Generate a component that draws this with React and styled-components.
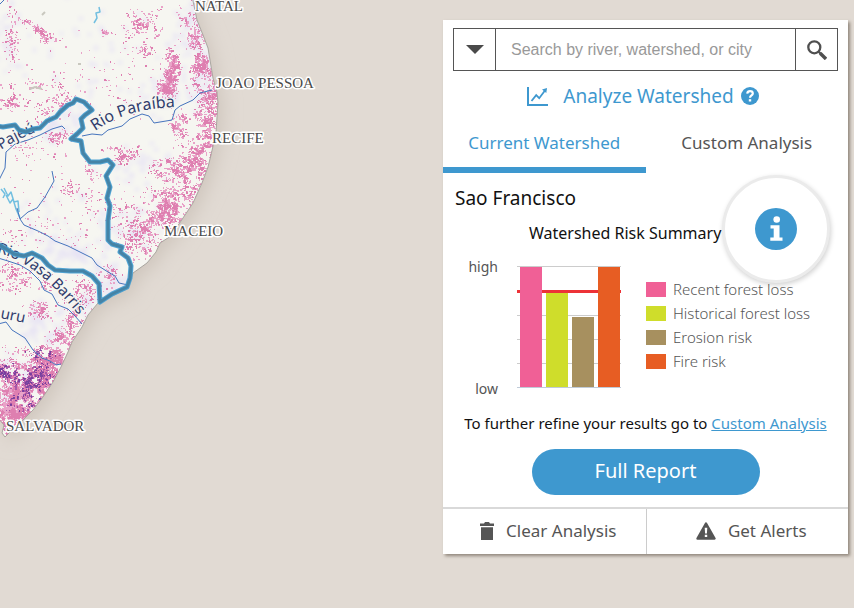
import React from "react";
import styled, { createGlobalStyle, css } from "styled-components";

const blue = "#3e98cf";
const ink = "#555";
const sans = `"Noto Sans", "Open Sans", sans-serif`;

const GlobalStyle = createGlobalStyle`
  *, *::before, *::after { box-sizing: border-box; }
  body { margin: 0; background: #e1dad3; font-family: ${sans}; color: #111; }
  button, input { font: inherit; color: inherit; }
  button { margin: 0; padding: 0; border: 0; background: none; cursor: pointer; }
  h1, h2, p, ul { margin: 0; padding: 0; font-weight: 400; list-style: none; }
`;

/* ---------- map ---------- */

const COAST =
  "M-4-4H192L197 20L203 35L208 48L210 60L213 78L217 92L218 103L217 117L216 133L211 155L208 167L202 183L193 203L183 218L171 236L160 243L156 252L147 263L133 273L128 288L98 303L88 315L82 327L72 342L68 352L61 367L53 382L43 397L33 410L20 423L10 432L5 437L2 433L4 425L-4 416Z";

const SHED =
  "M-4 126L3 127L15 125L19 130L26 132L33 129L40 128L47 121L56 117L60 112L68 105L73 103L76 99L84 102L92 110L85 115L81 119L83 128L77 134L71 139L81 141L83 153L90 162L100 162L108 160L113 165L106 176L110 187L107 198L110 206L108 220L108 240L112 244L122 247L120 252L128 258L131 266L130 278L127 287L112 294L100 302L99 284L92 276L83 271L70 271L55 270L48 265L42 258L32 253L24 256L14 254L8 250L-4 243";

const RIVERS = [
  "M82 136L92 134L102 135L108 130L122 126L130 119L142 114L149 116L154 123L172 120L175 110L180 106L193 100L200 93L212 90",
  "M65 129L62 126L52 129L40 135L28 140L15 144L6 152L5 168L-2 182",
  "M52 171L54 181L45 197L37 208L28 212L20 219L17 208M20 219L24 225L38 231L48 236L55 241L68 246L80 252L92 258L97 265L108 272L115 276L119 283L128 285",
  "M-2 258L8 261L20 265L30 271L40 281L44 290L52 294L58 305L68 309L75 316L82 324",
  "M-2 324L6 322L12 330L25 338L33 350L42 358L50 361L56 365L61 364",
  "M0 4L4 0",
];

const PALE_RIVERS = [
  "M99 7L100 12L96 13L97 18L94 23",
  "M1 189L5 194L3 198M4 188L8 196L11 192L14 202L18 201L19 212M6 195L10 203L13 199L16 209L20 218",
];

function makeRandom(seed) {
  let s = seed;
  return () => {
    s = (s * 1664525 + 1013904223) % 4294967296;
    return s / 4294967296;
  };
}

function hash(x, y) {
  const n = Math.sin(x * 127.1 + y * 311.7) * 43758.5453;
  return n - Math.floor(n);
}

// Smooth noise on a coarse grid; it breaks the patches into irregular clumps
function noise(x, y, cell) {
  const gx = Math.floor(x / cell);
  const gy = Math.floor(y / cell);
  const fx = x / cell - gx;
  const fy = y / cell - gy;
  const top = hash(gx, gy) * (1 - fx) + hash(gx + 1, gy) * fx;
  const low = hash(gx, gy + 1) * (1 - fx) + hash(gx + 1, gy + 1) * fx;
  return top * (1 - fy) + low * fy;
}

// Each patch: centre x, centre y, spread x, spread y, slope, number of cells
function speckle(patches, seed, size, clump) {
  const rnd = makeRandom(seed);
  const g = () => (rnd() + rnd() + rnd() - 1.5) * 1.15;
  let d = "";
  patches.forEach(([cx, cy, sx, sy, slope, n]) => {
    for (let i = 0; i < n; i += 1) {
      const gx = g();
      const x = Math.round(cx + gx * sx);
      const y = Math.round(cy + g() * sy + gx * sx * slope);
      const w = size + (rnd() > 0.6 ? 1 : 0);
      const h = size + (rnd() > 0.7 ? 1 : 0);
      if (noise(x, y, 5) * 0.6 + noise(x + 40, y, 2) * 0.4 > clump) d += `M${x} ${y}h${w}v${h}h-${w}z`;
    }
  });
  return d;
}

const PINK = [
  [11, 38, 6, 26, 0, 80], [36, 28, 16, 4, 0.6, 90], [46, 40, 5, 6, 0.4, 50],
  [106, 31, 5, 4, 0, 32], [140, 22, 16, 12, -0.4, 130], [143, 50, 8, 7, 0, 45],
  [158, 32, 4, 5, 0, 24], [171, 72, 6, 17, -0.4, 400], [165, 88, 7, 6, 0, 140],
  [186, 20, 9, 20, 0.3, 120], [195, 38, 8, 12, 0, 130], [201, 64, 9, 12, 0, 240],
  [211, 92, 6, 22, 0, 150], [198, 86, 9, 10, 0, 60], [178, 124, 7, 11, 0, 190],
  [205, 134, 10, 32, -0.1, 520], [194, 160, 18, 22, -0.5, 300],
  [182, 182, 24, 22, -0.7, 420], [160, 204, 24, 18, -0.5, 380],
  [165, 168, 14, 10, -0.3, 130], [176, 210, 16, 12, -0.5, 260],
  [150, 222, 24, 14, -0.5, 200], [135, 236, 14, 14, -0.4, 60],
  [148, 243, 13, 9, -0.7, 90], [125, 155, 11, 6, -0.4, 90], [112, 150, 10, 5, 0, 45],
  [35, 85, 28, 5, 0, 75], [13, 102, 12, 7, 0, 75], [50, 106, 20, 10, -0.4, 90],
  [58, 136, 12, 8, 0, 70], [25, 150, 22, 12, 0, 40], [93, 172, 10, 8, 0, 55],
  [70, 190, 9, 8, 0, 26], [95, 205, 14, 14, 0, 36], [108, 276, 10, 10, 0, 70],
  [66, 232, 36, 9, 0.3, 45], [20, 230, 18, 14, 0, 30], [15, 273, 14, 9, 0.4, 90],
  [8, 284, 12, 8, 0, 45], [40, 310, 12, 8, 0, 120], [82, 292, 14, 13, -0.3, 150],
  [73, 318, 9, 8, -0.3, 110], [45, 283, 8, 7, 0, 30], [58, 345, 11, 16, -0.6, 340],
  [45, 355, 13, 8, 0, 150], [35, 382, 26, 22, -0.6, 1900], [16, 402, 18, 22, 0.2, 1300],
  [10, 370, 14, 9, 0, 250], [8, 415, 11, 13, 0, 300], [20, 350, 22, 7, 0, 40],
  [115, 80, 70, 45, 0, 110], [40, 200, 60, 70, 0, 60], [120, 215, 12, 25, 0, 45],
];

const VIOLET = [
  [6, 371, 10, 6, 0, 110], [24, 378, 15, 8, 0, 130], [30, 392, 9, 16, 0, 80],
  [44, 353, 15, 4, 0, 40], [18, 400, 12, 9, 0, 30], [40, 372, 9, 10, -0.4, 45],
  [50, 382, 5, 7, 0, 20],
];

const LILAC = [
  [188, 28, 12, 28, 0, 65], [205, 75, 12, 28, 0, 70], [168, 95, 24, 22, 0, 55],
  [10, 35, 14, 30, 0, 35], [60, 122, 24, 14, -0.4, 55], [135, 225, 25, 18, -0.4, 60],
  [65, 250, 28, 15, 0.3, 60], [112, 280, 16, 16, 0, 75], [40, 325, 22, 22, 0, 80],
  [140, 165, 35, 18, 0, 40], [100, 50, 90, 50, 0, 65], [75, 225, 45, 32, 0, 60],
  [15, 385, 20, 30, 0, 95], [85, 300, 14, 14, 0, 35],
];

const PATCH_PINK = speckle(PINK, 17, 1, 0.4);
const PATCH_ROSE = speckle(PINK, 71, 1, 0.54);
const PATCH_VIOLET = speckle(VIOLET, 5, 1, 0.4);
const PATCH_PLUM = speckle(VIOLET, 9, 1, 0.5);
const PATCH_LILAC = speckle(LILAC, 31, 3, 0.3);

const CITIES = [
  ["NATAL", 195, 11],
  ["JOAO PESSOA", 216, 88],
  ["RECIFE", 212, 143],
  ["MACEIO", 164, 236],
  ["SALVADOR", 6, 431],
];

const Page = styled.main`
  display: grid;
  min-height: 100vh;
  overflow: hidden;
`;

const MapCanvas = styled.svg`
  grid-area: 1 / 1;
  width: 100%;
  height: 100vh;
  display: block;
`;

const CityLabel = styled.text`
  font-family: "Liberation Serif", serif;
  font-size: 15px;
  fill: #4a4a4a;
  stroke: #fff;
  stroke-width: 3px;
  stroke-linejoin: round;
  paint-order: stroke;
`;

const RiverLabel = styled.text`
  font-family: ${sans};
  font-size: ${(p) => p.$size || 15}px;
  fill: #303c6c;
  stroke: #f6f6f1;
  stroke-width: 2px;
  paint-order: stroke;
`;

function WatershedMap() {
  return (
    <MapCanvas viewBox="0 0 854 608" preserveAspectRatio="xMinYMin slice" role="img" aria-label="Map of the Sao Francisco watershed">
      <defs>
        <clipPath id="land"><path d={COAST} /></clipPath>
        <filter id="shore" x="-20%" y="-20%" width="140%" height="140%"><feGaussianBlur stdDeviation="9" /></filter>
        <filter id="haze"><feGaussianBlur stdDeviation="2" /></filter>
        <path id="paraiba" d="M95 131Q128 107 182 107" />
        <path id="pajeu" d="M-9 158Q10 140 50 127" />
        <path id="vasa" d="M-3 253Q40 261 92 333" />
        <path id="uru" d="M0 318L40 326" />
      </defs>
      <rect width="854" height="608" fill="#e1dad3" />
      <path d={COAST} transform="translate(5 5)" fill="#cfc6bd" filter="url(#shore)" />
      <path d={COAST} fill="#f6f6f1" />
      <g clipPath="url(#land)">
        <path d={PATCH_LILAC} fill="#e6e2f4" filter="url(#haze)" />
        <path d={PATCH_PINK} fill="#e9a3c8" />
        <path d={PATCH_ROSE} fill="#de7fb0" />
        <path d={PATCH_VIOLET} fill="#a04fa6" opacity="0.85" />
        <path d={PATCH_PLUM} fill="#6d3a9c" opacity="0.85" />
        <path d="M30 89l5-2l7 2M42 15l3-3M78 64h3" fill="none" stroke="#c9c8bf" strokeWidth="2" />
      </g>
      <path d={COAST} fill="none" stroke="#aaa6a0" />
      <g fill="none" strokeLinejoin="round">
        {PALE_RIVERS.map((d) => <path key={d} d={d} stroke="#72bfe0" strokeWidth="1.5" />)}
        {RIVERS.map((d) => <path key={d} d={d} stroke="#4674bd" strokeWidth="1" />)}
      </g>
      <RiverLabel $size={16}><textPath href="#paraiba">Rio Paraíba</textPath></RiverLabel>
      <RiverLabel><textPath href="#pajeu">o Pajeú</textPath></RiverLabel>
      <RiverLabel><textPath href="#vasa">Rio Vasa Barris</textPath></RiverLabel>
      <RiverLabel><textPath href="#uru">uru</textPath></RiverLabel>
      <g fill="none" strokeLinejoin="round">
        <path d={SHED} stroke="#3f9bd0" strokeWidth="5" opacity="0.9" />
        <path d={SHED} stroke="#4583a6" strokeWidth="3" />
      </g>
      {CITIES.map(([name, x, y]) => <CityLabel key={name} x={x} y={y}>{name}</CityLabel>)}
    </MapCanvas>
  );
}

/* ---------- icons ---------- */

const Icon = styled.svg`
  display: block;
  flex: none;
  width: ${(p) => p.$w}px;
  height: ${(p) => p.$h || p.$w}px;
`;

const CaretIcon = () => (
  <Icon $w={18} $h={9} viewBox="0 0 18 9" aria-hidden="true"><path d="M0 0h18L9 9z" fill="#4a4a4a" /></Icon>
);

const SearchIcon = () => (
  <Icon $w={20} viewBox="0 0 20 20" fill="none" stroke="#4f4f4f" aria-hidden="true">
    <circle cx="7.3" cy="7.3" r="6" strokeWidth="2.3" />
    <path d="M11.7 11.7L13.6 13.6" strokeWidth="2.3" />
    <path d="M13.2 13.2L19 19" strokeWidth="3.4" />
  </Icon>
);

const ChartIcon = () => (
  <Icon $w={22} $h={19} viewBox="0 0 22 19" fill="none" stroke={blue} aria-hidden="true">
    <path d="M1 0V18H21" strokeWidth="2" />
    <path d="M4.5 14L9.2 8.2L12.2 11.2L17.8 3.8" strokeWidth="1.8" />
    <path d="M15 2.5L20 1L19.3 6Z" fill={blue} stroke="none" />
  </Icon>
);

const HelpIcon = () => (
  <Icon $w={18} viewBox="0 0 18 18" fill="none" aria-hidden="true">
    <circle cx="9" cy="9" r="9" fill={blue} />
    <path d="M6.2 6.6C6.5 5 7.5 4.2 9 4.2C10.7 4.2 11.8 5.2 11.8 6.5C11.8 8.4 9 8.5 9 10.8" stroke="#fff" strokeWidth="2.2" />
    <path d="M7.8 12.2h2.4v2.3H7.8z" fill="#fff" />
  </Icon>
);

const InfoIcon = () => (
  <Icon $w={42} viewBox="0 0 42 42" aria-hidden="true">
    <circle cx="21" cy="21" r="21" fill={blue} />
    <circle cx="21.7" cy="11.5" r="3.3" fill="#fff" />
    <path d="M15.5 17.2h9v12.2h3v3.3H15.3v-3.3h3.4v-8.9h-3.2z" fill="#fff" />
  </Icon>
);

const TrashIcon = () => (
  <Icon $w={14} $h={18} viewBox="0 0 14 18" fill={ink} aria-hidden="true">
    <path d="M0 1.5h4L5 0h4l1 1.5h4V4H0zM1 5.2h12V18H1z" />
  </Icon>
);

const AlertIcon = () => (
  <Icon $w={20} $h={18} viewBox="0 0 20 18" aria-hidden="true">
    <path d="M10 1.5L18.5 16.5H1.5Z" fill={ink} stroke={ink} strokeWidth="2.4" strokeLinejoin="round" />
    <path d="M8.7 5.8h2.6l-.4 5.7H9.1zM8.8 12.7h2.4v2.2H8.8z" fill="#fff" />
  </Icon>
);

/* ---------- panel ---------- */

const Panel = styled.section`
  grid-area: 1 / 1;
  position: relative;
  justify-self: end;
  align-self: start;
  width: min(405px, 100% - 12px);
  margin: 20px 6px 20px 0;
  background: #fff;
  box-shadow: 2px 2px 3px rgba(80, 70, 55, 0.55);
`;

const SearchBar = styled.form`
  display: grid;
  grid-template-columns: 41px 1fr 41px;
  height: 43px;
  margin: 8px 10px 0;
  border: 1px solid #555;
`;

const SearchButton = styled.button`
  display: grid;
  place-items: center;
`;

const SearchInput = styled.input`
  min-width: 0;
  padding: 0 15px;
  border: solid #555;
  border-width: 0 1px;
  background: none;
  font-family: "Liberation Sans", Arial, sans-serif;
  font-size: 16px;
  outline: 0;
  &::placeholder { color: #999; opacity: 1; }
`;

const AnalyzeRow = styled.div`
  display: flex;
  align-items: center;
  justify-content: center;
  gap: 7px;
  height: 50px;
  padding-right: 5px;
  color: ${blue};
`;

const AnalyzeTitle = styled.h1`
  display: flex;
  align-items: center;
  gap: 14px;
  font-size: 19px;
`;

const Tabs = styled.div`
  display: grid;
  grid-template-columns: 1fr 1fr;
  height: 52px;
`;

const Tab = styled.button`
  padding-bottom: 4px;
  border-bottom: 6px solid transparent;
  color: ${ink};
  font-size: 17px;
  ${(p) => p.$active && css`
    border-color: ${blue};
    color: ${blue};
  `}
`;

const PlaceName = styled.h2`
  padding: 10px 12px 0;
  font-size: 19px;
  line-height: 30px;
`;

const ChartTitle = styled.h2`
  padding-left: 86px;
  font-size: 16px;
  line-height: 40px;
`;

const ChartRow = styled.div`
  display: grid;
  grid-template-columns: 55px 104px 1fr;
  column-gap: 19px;
  height: 146px;
  padding-top: 4px;
`;

const Scale = styled.div`
  display: flex;
  flex-direction: column;
  justify-content: space-between;
  text-align: right;
  color: ${ink};
  font-size: 14px;
  line-height: 20px;
  height: 142px;
`;

const Plot = styled.svg`
  display: block;
  width: 104px;
  height: 123px;
  margin-top: 9px;
`;

const Legend = styled.ul`
  display: grid;
  align-content: start;
  padding: 20px 0 0 6px;
  color: #555;
  font-size: 15px;
  font-weight: 300;
  line-height: 24px;
`;

const LegendItem = styled.li`
  display: flex;
  align-items: center;
  gap: 7px;
  white-space: nowrap;
  &::before {
    content: "";
    flex: none;
    width: 20px;
    height: 15px;
    background: ${(p) => p.$color};
  }
`;

const Hint = styled.p`
  padding-top: 12px;
  text-align: center;
  font-size: 15px;
  line-height: 24px;
`;

const TextLink = styled.a`
  color: ${blue};
`;

const ReportButton = styled.button`
  display: block;
  width: 228px;
  height: 46px;
  margin: 14px auto 12px;
  padding-bottom: 4px;
  border-radius: 23px;
  background: ${blue};
  color: #fff;
  font-size: 20px;
`;

const Actions = styled.div`
  display: grid;
  grid-template-columns: 1fr 1fr;
  height: 47px;
  border-top: 2px solid #d9d9d9;
`;

const Action = styled.button`
  display: flex;
  align-items: center;
  justify-content: center;
  gap: 12px;
  padding: 0 0 2px 8px;
  color: ${ink};
  font-size: 17px;
  & + & { border-left: 1px solid #ccc; }
`;

const InfoSpot = styled.button`
  position: absolute;
  top: 155px;
  right: 18px;
  display: grid;
  place-items: center;
  width: 108px;
  height: 108px;
  border: 3px solid #ebebeb;
  border-radius: 50%;
  background: #fff;
  box-shadow: 1px 2px 5px rgba(0, 0, 0, 0.18);
`;

const BARS = [
  { label: "Recent forest loss", color: "#f06096", x: 3, top: 1 },
  { label: "Historical forest loss", color: "#cfdd2b", x: 29, top: 27 },
  { label: "Erosion risk", color: "#a7905f", x: 55, top: 51 },
  { label: "Fire risk", color: "#e75d23", x: 81, top: 1 },
];

function RiskPlot() {
  return (
    <Plot viewBox="0 0 104 123" role="img" aria-label="Watershed risk levels">
      {[0, 49, 73, 97].map((y) => <rect key={y} y={y} width="104" height="1" fill="#ccc" />)}
      <rect y="24" width="104" height="3" fill="#ed3237" />
      {BARS.map((b) => <rect key={b.label} x={b.x} y={b.top} width="22" height={121 - b.top} fill={b.color} />)}
      <rect y="121" width="104" height="1" fill="#c0cbd8" />
    </Plot>
  );
}

export default function App() {
  return (
    <Page>
      <GlobalStyle />
      <WatershedMap />
      <Panel>
        <SearchBar role="search" onSubmit={(e) => e.preventDefault()}>
          <SearchButton type="button" aria-label="Search options"><CaretIcon /></SearchButton>
          <SearchInput type="text" aria-label="Search" placeholder="Search by river, watershed, or city" />
          <SearchButton type="submit" aria-label="Search"><SearchIcon /></SearchButton>
        </SearchBar>
        <AnalyzeRow>
          <AnalyzeTitle><ChartIcon />Analyze Watershed</AnalyzeTitle>
          <button type="button" aria-label="Help"><HelpIcon /></button>
        </AnalyzeRow>
        <Tabs role="tablist">
          <Tab type="button" role="tab" aria-selected="true" $active>Current Watershed</Tab>
          <Tab type="button" role="tab" aria-selected="false">Custom Analysis</Tab>
        </Tabs>
        <PlaceName>Sao Francisco</PlaceName>
        <ChartTitle>Watershed Risk Summary</ChartTitle>
        <ChartRow>
          <Scale><span>high</span><span>low</span></Scale>
          <RiskPlot />
          <Legend>
            {BARS.map((b) => <LegendItem key={b.label} $color={b.color}>{b.label}</LegendItem>)}
          </Legend>
        </ChartRow>
        <Hint>To further refine your results go to <TextLink href="#custom">Custom Analysis</TextLink></Hint>
        <ReportButton type="button">Full Report</ReportButton>
        <Actions>
          <Action type="button"><TrashIcon />Clear Analysis</Action>
          <Action type="button"><AlertIcon />Get Alerts</Action>
        </Actions>
        <InfoSpot type="button" aria-label="About the risk summary"><InfoIcon /></InfoSpot>
      </Panel>
    </Page>
  );
}
